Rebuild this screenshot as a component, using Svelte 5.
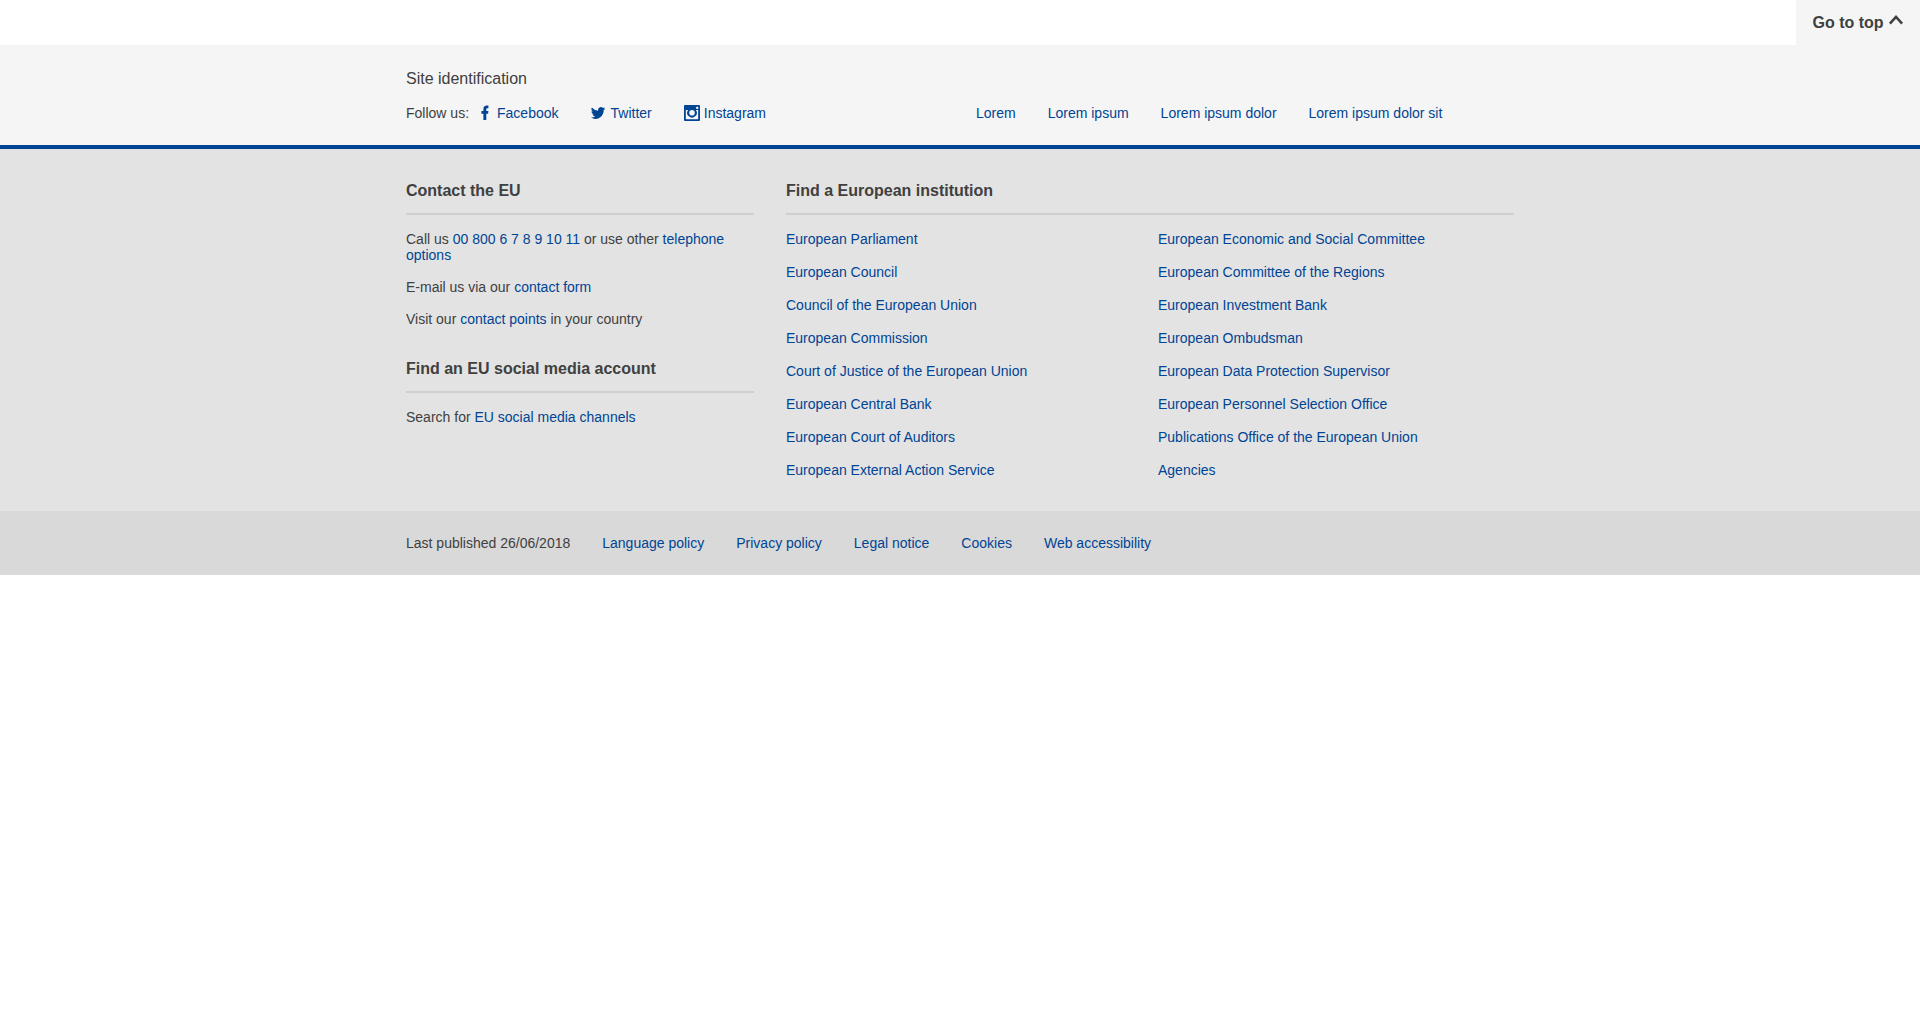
<script>
  const siteLinks = ['Lorem', 'Lorem ipsum', 'Lorem ipsum dolor', 'Lorem ipsum dolor sit'];
  const institutions = [
    [
      'European Parliament',
      'European Council',
      'Council of the European Union',
      'European Commission',
      'Court of Justice of the European Union',
      'European Central Bank',
      'European Court of Auditors',
      'European External Action Service'
    ],
    [
      'European Economic and Social Committee',
      'European Committee of the Regions',
      'European Investment Bank',
      'European Ombudsman',
      'European Data Protection Supervisor',
      'European Personnel Selection Office',
      'Publications Office of the European Union',
      'Agencies'
    ]
  ];
  const policies = ['Language policy', 'Privacy policy', 'Legal notice', 'Cookies', 'Web accessibility'];
</script>

<footer class="footer">
  <div class="top-row">
    <a class="go-top" href="#top">
      <span>Go to top</span>
      <svg class="chevron" viewBox="0 0 16 16" aria-hidden="true"><path d="M1.9 11.7 8 4.9 14.1 11.7" /></svg>
    </a>
  </div>

  <section class="identity">
    <div class="container">
      <div class="site-title">Site identification</div>
      <div class="site-row">
        <div class="follow">
          <span class="follow-label">Follow us:</span>
          <ul class="inline">
            <li>
              <a class="social" href="#facebook">
                <svg class="icon" viewBox="0 0 16 16" aria-hidden="true"><path d="M6.4 15.1V8.7H4.4V5.9h2V4.2C6.4 1.9 7.6.6 9.9.6h1.5v2.7h-.9c-.9 0-1.2.4-1.2 1.2v1.4h2.1l-.3 2.8H9.3v6.4z" /></svg>
                <span>Facebook</span>
              </a>
            </li>
            <li>
              <a class="social" href="#twitter">
                <svg class="icon" viewBox="0 0 16 16" aria-hidden="true"><path d="M14.3 3.5c-.5.25-1.1.4-1.7.5.6-.4 1.1-1 1.3-1.7-.55.35-1.2.6-1.85.7a2.95 2.95 0 0 0-5 2.7A8.3 8.3 0 0 1 .9 2.6a2.95 2.95 0 0 0 .9 3.95c-.5 0-.95-.15-1.35-.4 0 1.45 1 2.7 2.35 3-.45.1-.9.1-1.3.05.35 1.15 1.45 2 2.75 2.05A5.9 5.9 0 0 1-.1 12.5a8.3 8.3 0 0 0 12.8-7.4c.6-.4 1.15-.95 1.6-1.6z" /></svg>
                <span>Twitter</span>
              </a>
            </li>
            <li>
              <a class="social" href="#instagram">
                <svg class="icon" viewBox="0 0 16 16" aria-hidden="true"><path fill-rule="evenodd" d="M1 0h14a1 1 0 0 1 1 1v14a1 1 0 0 1-1 1H1a1 1 0 0 1-1-1V1a1 1 0 0 1 1-1zm11.6 1.7a.4.4 0 0 0-.4.4v1.5c0 .2.2.4.4.4h1.3c.3 0 .4-.2.4-.4V2.1a.4.4 0 0 0-.4-.4zM1.8 5V13.7c0 .3.2.5.5.5h11.4c.3 0 .5-.2.5-.5V5h-2.3a4.8 4.8 0 1 1-7.8 0zM8 5a2.8 2.8 0 1 0 0 5.6A2.8 2.8 0 0 0 8 5z" /></svg>
                <span>Instagram</span>
              </a>
            </li>
          </ul>
        </div>
        <ul class="inline">
          {#each siteLinks as label}
            <li><a href="#site">{label}</a></li>
          {/each}
        </ul>
      </div>
    </div>
  </section>

  <section class="corporate">
    <div class="container columns">
      <div>
        <h2>Contact the EU</h2>
        <p>Call us <a href="#phone">00 800 6 7 8 9 10 11</a> or use other <a href="#options">telephone options</a></p>
        <p>E-mail us via our <a href="#form">contact form</a></p>
        <p>Visit our <a href="#points">contact points</a> in your country</p>
        <h2 class="second">Find an EU social media account</h2>
        <p>Search for <a href="#channels">EU social media channels</a></p>
      </div>
      <div>
        <h2>Find a European institution</h2>
        <div class="institutions">
          {#each institutions as group}
            <ul>
              {#each group as name}
                <li><a href="#institution">{name}</a></li>
              {/each}
            </ul>
          {/each}
        </div>
      </div>
    </div>
  </section>

  <section class="legal">
    <div class="container inline">
      <span>Last published 26/06/2018</span>
      {#each policies as policy}
        <a href="#policy">{policy}</a>
      {/each}
    </div>
  </section>
</footer>

<style>
  :global(body) {
    margin: 0;
    background: #fff;
  }
  .footer {
    font: 14px/16px Arial, 'Liberation Sans', sans-serif;
    color: #404040;
  }
  a {
    color: #004494;
    text-decoration: none;
  }
  ul {
    margin: 0;
    padding: 0;
    list-style: none;
  }
  .container {
    width: 1108px;
    margin: 0 auto;
  }
  .top-row {
    display: flex;
    justify-content: flex-end;
    height: 45px;
  }
  .go-top {
    display: flex;
    align-items: center;
    gap: 4px;
    box-sizing: border-box;
    width: 124px;
    padding: 0 0 0 16.5px;
    background: #f5f5f5;
    color: #404040;
    font-size: 16px;
    font-weight: 700;
    white-space: nowrap;
  }
  .chevron {
    width: 16px;
    height: 16px;
    flex: none;
    margin-top: -5px;
    fill: none;
    stroke: #404040;
    stroke-width: 2.5;
  }
  .identity {
    box-sizing: border-box;
    height: 104px;
    padding-top: 24px;
    background: #f5f5f5;
    border-bottom: 4px solid #004494;
  }
  .site-title {
    font-size: 16px;
    line-height: 20px;
  }
  .site-row {
    display: grid;
    grid-template-columns: 570px 1fr;
    margin-top: 16px;
  }
  .follow {
    display: flex;
    gap: 8px;
  }
  .inline {
    display: flex;
    gap: 32px;
    white-space: nowrap;
  }
  .social {
    display: flex;
    gap: 4px;
  }
  .icon {
    width: 16px;
    height: 16px;
    overflow: visible;
    fill: #004494;
  }
  .corporate {
    box-sizing: border-box;
    height: 362px;
    padding-top: 32px;
    background: #e3e3e3;
  }
  .columns {
    display: grid;
    grid-template-columns: 348px 728px;
    gap: 32px;
  }
  h2 {
    margin: 0 0 16px;
    padding-bottom: 12px;
    border-bottom: 2px solid #cfcfcf;
    font-size: 16px;
    line-height: 20px;
    font-weight: 700;
  }
  h2.second {
    margin-top: 32px;
  }
  p {
    margin: 0 0 16px;
  }
  .institutions {
    display: grid;
    grid-template-columns: 356px 356px;
    column-gap: 16px;
  }
  .institutions li {
    height: 33px;
  }
  .legal {
    box-sizing: border-box;
    height: 64px;
    padding-top: 24px;
    background: #d9d9d9;
  }
</style>
